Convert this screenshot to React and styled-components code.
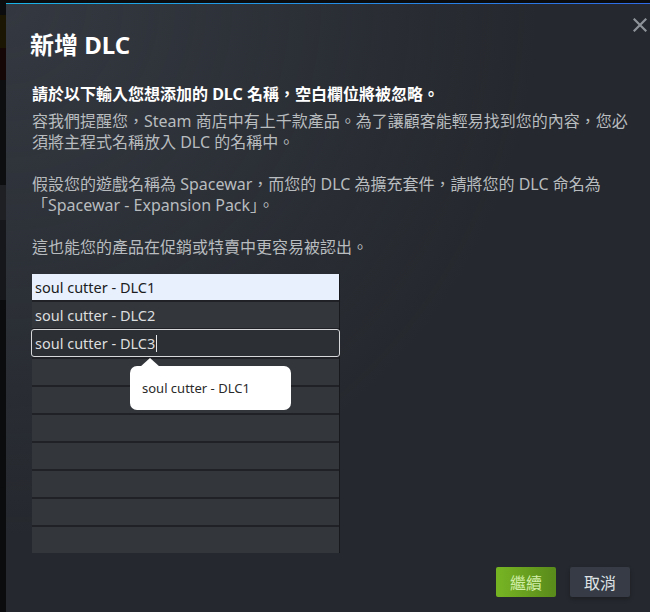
import React from "react";
import styled, { createGlobalStyle } from "styled-components";

const GlobalStyle = createGlobalStyle`
  html, body {
    margin: 0;
    padding: 0;
    width: 650px;
    height: 612px;
    overflow: hidden;
  }
  body {
    font-family: "Noto Sans", "Noto Sans CJK TC", sans-serif;
    background: linear-gradient(
      to bottom,
      #0b0c0e 0 15px,
      #1b1604 15px 48px,
      #160707 48px 80px,
      #0d0e10 80px 185px,
      #1e2023 185px 220px,
      #15171a 220px 300px,
      #0b0c0e 300px
    );
  }
`;

const Page = styled.div`
  padding: 3px 0 0 6px;
  height: 612px;
  box-sizing: border-box;
  overflow: hidden;
`;

const Dialog = styled.div`
  position: relative;
  width: 644px;
  height: 609px;
  box-sizing: border-box;
  padding: 26px 26px 0 26px;
  background: radial-gradient(
      circle at top left,
      rgba(74, 81, 92, 0.4) 0%,
      rgba(75, 81, 92, 0) 60%
    ),
    #25282e;
  border-top: 1px solid transparent;
  border-image: linear-gradient(to right, #19b4e6 0%, #2f6ae6 100%) 1;
  border-left: 0;
  border-right: 0;
  border-bottom: 0;
  color: #b8bcbf;
`;

const CloseButton = styled.button`
  position: absolute;
  top: 10px;
  left: 623px;
  width: 22px;
  height: 22px;
  padding: 0;
  border: 0;
  background: none;
  display: flex;
  align-items: center;
  justify-content: center;
  cursor: pointer;
`;

const Title = styled.h1`
  margin: 0 0 0 -2px;
  font-size: 24px;
  line-height: 30px;
  font-weight: 700;
  color: #ffffff;
`;

const Lead = styled.div`
  margin-top: 23px;
  font-size: 16px;
  line-height: 22px;
  font-weight: 700;
  color: #ffffff;
`;

const Body = styled.div`
  margin-top: 6px;
  width: 600px;
  font-size: 16px;
  line-height: 21px;
  color: #b8bcbf;
`;

const FieldList = styled.div`
  position: relative;
  margin-top: 16px;
  width: 307px;
  display: flex;
  flex-direction: column;
  gap: 2px;
  background: #1f2126;
  border-right: 1px solid #18191d;
`;

const Field = styled.div`
  box-sizing: border-box;
  display: flex;
  align-items: center;
  font-family: "Noto Sans", "Noto Sans CJK TC", sans-serif;
  font-size: 14.5px;
  color: ${(p) => (p.$filled ? "#1b1d21" : "#dcdedf")};
  background: ${(p) =>
    p.$filled ? "#e8f0fe" : p.$focused ? "#2c2f34" : "#33373c"};
  border: ${(p) => (p.$focused ? "1px solid #d6d8da" : "none")};
  border-radius: ${(p) => (p.$focused ? "3px" : "0")};
  margin: ${(p) => (p.$focused ? "-1px -1px 0 -1px" : "0")};
  height: ${(p) => (p.$focused ? "28px" : "26px")};
  padding: 0 3px;
`;

const Caret = styled.span`
  display: inline-block;
  width: 1px;
  height: 17px;
  margin-left: 1px;
  background: #e6e8ea;
`;

const Suggestion = styled.div`
  position: absolute;
  left: 98px;
  top: 92px;
  width: 161px;
  height: 44px;
  box-sizing: border-box;
  padding-left: 12px;
  display: flex;
  align-items: center;
  background: #ffffff;
  border-radius: 7px;
  font-size: 13px;
  color: #2a2a2a;

  &::before {
    content: "";
    position: absolute;
    left: 10px;
    top: -8px;
    border-left: 10px solid transparent;
    border-right: 10px solid transparent;
    border-bottom: 9px solid #ffffff;
  }
`;

const Actions = styled.div`
  width: 598px;
  margin-top: 14px;
  display: flex;
  justify-content: flex-end;
  gap: 14px;
`;

const Button = styled.button`
  width: 60px;
  height: 30px;
  padding: 0;
  border: 0;
  border-radius: 2px;
  font-family: "Noto Sans", "Noto Sans CJK TC", sans-serif;
  font-size: 16px;
  cursor: pointer;
  color: ${(p) => (p.$primary ? "#d2efa9" : "#dfe3e6")};
  background: ${(p) =>
    p.$primary
      ? "linear-gradient(to right, #76b323 5%, #5a8c1b 95%)"
      : "#363b45"};
  box-shadow: ${(p) => (p.$primary ? "none" : "0 2px 4px rgba(0,0,0,0.25)")};
`;

const names = ["soul cutter - DLC1", "soul cutter - DLC2", "soul cutter - DLC3"];

export default function App() {
  const rows = Array.from({ length: 10 }, (_, i) => names[i] || "");
  return (
    <>
      <GlobalStyle />
      <Page>
        <Dialog>
          <CloseButton aria-label="close">
            <svg width="14" height="14" viewBox="0 0 14 14">
              <path
                d="M1.5 1.5 L12.5 12.5 M12.5 1.5 L1.5 12.5"
                stroke="#8e939a"
                strokeWidth="2.2"
                strokeLinecap="square"
              />
            </svg>
          </CloseButton>
          <Title>新增 DLC</Title>
          <Lead>請於以下輸入您想添加的 DLC 名稱，空白欄位將被忽略。</Lead>
          <Body>
            容我們提醒您，Steam 商店中有上千款產品。為了讓顧客能輕易找到您的內容，您必須將主程式名稱放入 DLC 的名稱中。
            <br />
            <br />
            假設您的遊戲名稱為 Spacewar，而您的 DLC 為擴充套件，請將您的 DLC 命名為「Spacewar - Expansion Pack」。
            <br />
            <br />
            這也能您的產品在促銷或特賣中更容易被認出。
          </Body>
          <FieldList>
            {rows.map((v, i) => (
              <Field key={i} $filled={i === 0} $focused={i === 2}>
                {v}
                {i === 2 && <Caret />}
              </Field>
            ))}
            <Suggestion>soul cutter - DLC1</Suggestion>
          </FieldList>
          <Actions>
            <Button $primary>繼續</Button>
            <Button>取消</Button>
          </Actions>
        </Dialog>
      </Page>
    </>
  );
}
